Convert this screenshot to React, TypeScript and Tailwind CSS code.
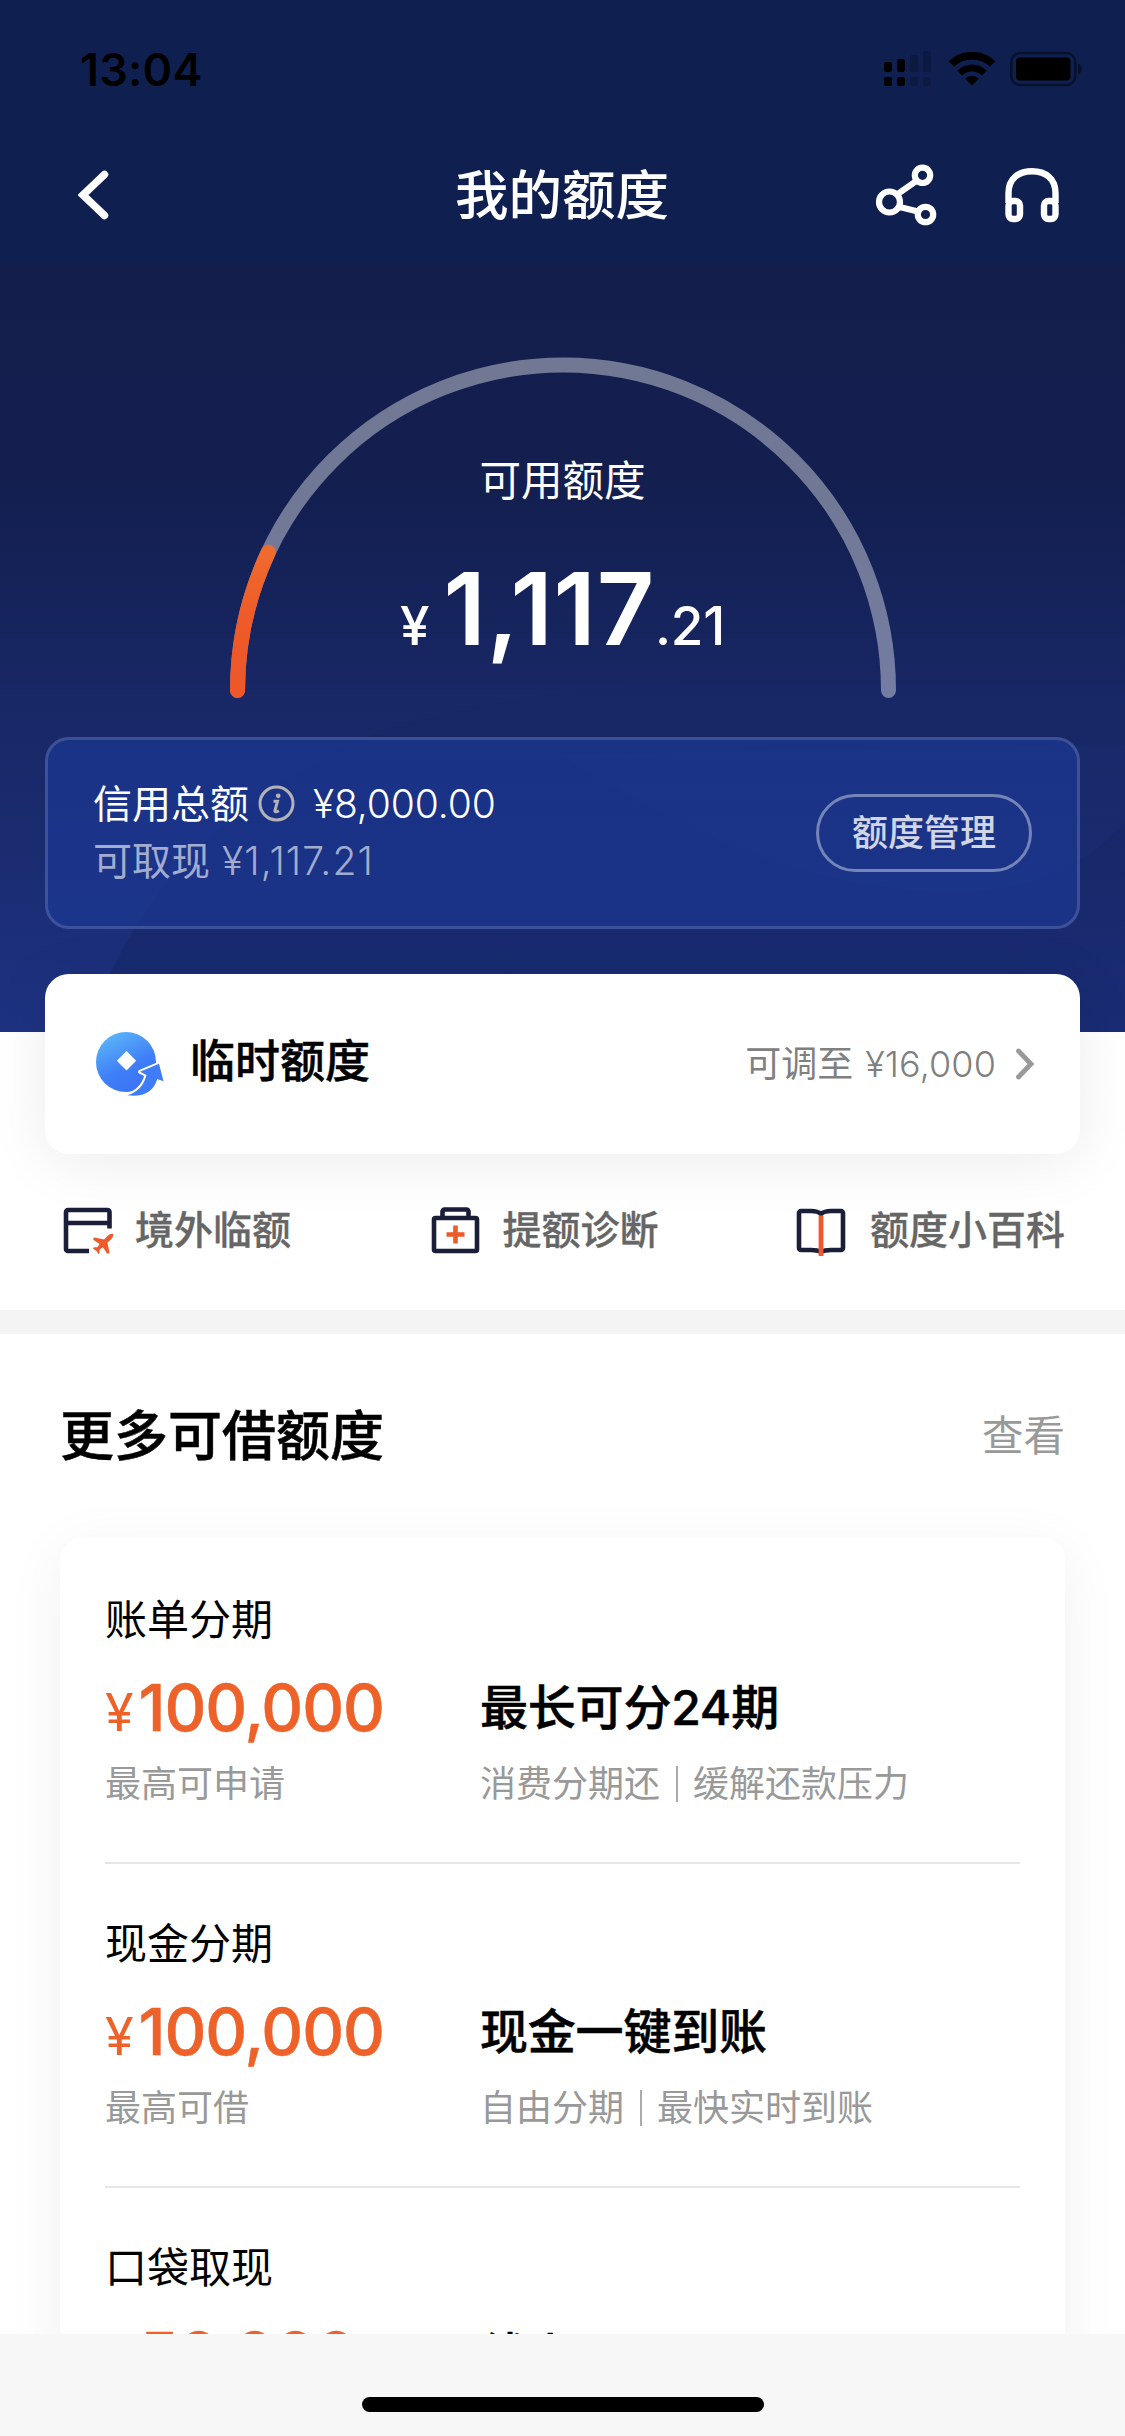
import type { ReactNode } from 'react';

interface Offer {
  name: string;
  amount: string;
  note?: string;
  title: string;
  tags?: string[];
}

const offers: Offer[] = [
  { name: '账单分期', amount: '100,000', note: '最高可申请', title: '最长可分24期', tags: ['消费分期还', '缓解还款压力'] },
  { name: '现金分期', amount: '100,000', note: '最高可借', title: '现金一键到账', tags: ['自由分期', '最快实时到账'] },
  { name: '口袋取现', amount: '50,000', title: '线上' },
];

const TOTAL = 8000;
const AVAILABLE = 1117.21;

function StatusBar() {
  return (
    <div className="flex h-[132px] items-center justify-between pt-1.5 pr-[43px] pl-[80px] text-black">
      <span className="text-[45px] leading-none font-semibold tracking-[0.2px]">13:04</span>
      <div className="flex items-center gap-[17px]">
        <svg width="48" height="36" viewBox="0 0 48 36" fill="currentColor">
          <rect x="0" y="11" width="8" height="10" rx="2" />
          <rect x="13" y="8" width="8" height="13" rx="2" />
          <rect x="26" y="4" width="8" height="17" rx="2" opacity=".2" />
          <rect x="39" y="0" width="8" height="21" rx="2" opacity=".2" />
          <rect x="0" y="26" width="8" height="9" rx="2" />
          <rect x="13" y="26" width="8" height="9" rx="2" />
          <rect x="26" y="26" width="8" height="9" rx="2" opacity=".2" />
          <rect x="39" y="26" width="8" height="9" rx="2" opacity=".2" />
        </svg>
        <svg width="46" height="34" viewBox="0 0 46 34" fill="none" stroke="currentColor">
          <path d="M2.5 12a29.5 29.5 0 0 1 41 0" strokeWidth="7.8" />
          <path d="M10.7 21a17.6 17.6 0 0 1 24.6 0" strokeWidth="7" />
          <path d="M23 33.5 16.2 26.6a9.8 9.8 0 0 1 13.6 0z" fill="currentColor" stroke="none" />
        </svg>
        <svg width="72" height="36" viewBox="0 0 72 36" className="-ml-[2px]">
          <rect x="1.3" y="2" width="64" height="32" rx="9" fill="none" stroke="currentColor" strokeWidth="2.6" opacity=".45" />
          <rect x="6" y="6.5" width="54.5" height="23" rx="4" fill="currentColor" />
          <path d="M68 12.5c5 2.5 5 8.5 0 11z" fill="currentColor" opacity=".5" />
        </svg>
      </div>
    </div>
  );
}

function NavBar() {
  return (
    <div className="grid h-[132px] grid-cols-3 items-center pr-[65px] pb-1.5 pl-[78px] text-white">
      <svg width="32" height="50" viewBox="0 0 32 50" fill="none" stroke="currentColor" strokeWidth="7.5" strokeLinecap="round">
        <path d="M26.5 4.5 5 25 26.5 45.5" strokeLinejoin="miter" />
      </svg>
      <h1 className="-ml-[14px] pt-[1px] text-center text-[53.5px] leading-none font-medium whitespace-nowrap">我的额度</h1>
      <div className="flex items-center justify-end gap-[67px]">
        <svg width="62" height="62" viewBox="0 0 62 62" fill="none" stroke="currentColor" strokeWidth="6.2">
          <circle cx="14.5" cy="38" r="10.5" />
          <circle cx="47.5" cy="11.3" r="7.7" />
          <circle cx="50.5" cy="50.5" r="7.7" />
          <path d="M22 30.5 42 16.5M24.5 43l18.5 4.5" />
        </svg>
        <svg width="56" height="56" viewBox="0 0 56 56" fill="none" stroke="currentColor" strokeWidth="6.4">
          <path d="M4.5 36V26C4.5 12 14 4.2 28 4.2S51.5 12 51.5 26v10" />
          <rect x="4.5" y="34" width="11.5" height="18" rx="4.5" />
          <rect x="40" y="34" width="11.5" height="18" rx="4.5" />
        </svg>
      </div>
    </div>
  );
}

// Half-circle gauge, the orange part is the share of the total that is available
function Gauge() {
  const angle = Math.PI * (AVAILABLE / TOTAL);
  const r = 325.5;
  const x = 333 - r * Math.cos(angle);
  const y = 333.5 - r * Math.sin(angle);

  return (
    <div className="mx-auto mt-[93px] grid h-[341px] w-[666px]">
      <svg className="col-start-1 row-start-1" width="666" height="341" viewBox="0 0 666 341" fill="none" strokeWidth="15" strokeLinecap="round">
        <defs>
          <linearGradient id="gauge" gradientUnits="userSpaceOnUse" x1="0" y1="185" x2="0" y2="341">
            <stop offset="0" stopColor="#f06c2d" />
            <stop offset=".5" stopColor="#ee5a29" />
            <stop offset="1" stopColor="#ef5628" />
          </linearGradient>
        </defs>
        <path d="M7.5 333.5a325.5 325.5 0 0 1 651 0" stroke="#fff" strokeOpacity=".4" />
        <path d={`M7.5 333.5A${r} ${r} 0 0 1 ${x} ${y}`} stroke="url(#gauge)" />
      </svg>
      <div className="col-start-1 row-start-1 flex flex-col items-center pt-[103px] text-white">
        <span className="text-[41.5px] leading-[42px]">可用额度</span>
        <div className="mt-[57px] flex items-baseline leading-[100px] font-medium">
          <span className="text-[53px]">¥</span>
          <span className="ml-[14px] text-[100px] font-semibold tracking-[0.8px]">1,117</span>
          <span className="text-[53px] tracking-[-0.3px]">.21</span>
        </div>
      </div>
    </div>
  );
}

function CreditPanel() {
  return (
    <div className="mx-[45px] mt-[39px] flex h-[192px] items-center justify-between rounded-[24px] border-[3px] border-white/15 bg-[#1d3a99]/60 pr-[45px] pl-[45px] text-white">
      <div className="flex flex-col gap-[18px] pb-[2px] text-[39px] leading-[39px]">
        <div className="flex items-center">
          <span>信用总额</span>
          <svg className="ml-[9px]" width="37" height="37" viewBox="0 0 37 37" fill="none" stroke="#b3b3b5">
            <circle cx="18.5" cy="18.5" r="16.5" strokeWidth="3" />
            <circle cx="20.2" cy="10.8" r="2.4" fill="#b3b3b5" stroke="none" />
            <path d="M15.5 16.3h4l-2.6 9.2c-.3 1.5.8 1.9 4 .2" strokeWidth="3" />
          </svg>
          <span className="ml-[18px] font-[350] tracking-[-0.1px]">¥8,000.00</span>
        </div>
        <div className="flex text-white/60">
          <span>可取现</span>
          <span className="ml-[12px] font-[350] tracking-[1.1px]">¥1,117.21</span>
        </div>
      </div>
      <button className="flex h-[78px] w-[216px] items-center justify-center rounded-full border-[3px] border-white/40 text-[36px] leading-none font-medium text-white/80">
        额度管理
      </button>
    </div>
  );
}

function TempLimitCard() {
  return (
    <div className="relative mx-[45px] -mt-[58px] flex h-[180px] items-center rounded-[24px] bg-white pr-[45px] pl-[45px] shadow-[0_8px_60px_rgba(0,0,0,0.08)]">
      <svg width="78" height="78" viewBox="0 0 78 78">
        <defs>
          <linearGradient id="coin" x1=".2" y1="0" x2=".7" y2="1">
            <stop offset="0" stopColor="#5cb8f9" />
            <stop offset=".6" stopColor="#3f7ff7" />
            <stop offset="1" stopColor="#3b72f6" />
          </linearGradient>
        </defs>
        <circle cx="36" cy="37" r="30" fill="url(#coin)" />
        <path d="m36.5 26 9.7 9.7-9.7 9.7-9.7-9.7z" fill="#fff" />
        <path
          d="M37.2 70.3C48 67 54 60 56.5 50l-6.5-3.2 19-8 4.5 17.5-6.3-2.3c-3.2 12.5-14 18.5-30 16.3z"
          fill="#3f7cf7"
          stroke="#fff"
          strokeWidth="4"
          strokeLinejoin="round"
          paintOrder="stroke"
        />
      </svg>
      <span className="-mt-[5px] ml-[22px] text-[45px] leading-none font-medium text-black [-webkit-text-stroke:0.5px]">临时额度</span>
      <div className="ml-auto flex items-center text-[36px] leading-none text-[#808080]">
        <span>可调至</span>
        <span className="ml-[12px] font-[350] tracking-[0.1px]">¥16,000</span>
        <svg className="ml-[19px]" width="20" height="32" viewBox="0 0 20 32" fill="none" stroke="#999" strokeWidth="4.8" strokeLinecap="round">
          <path d="m3.5 3 12.5 13-12.5 13" />
        </svg>
      </div>
    </div>
  );
}

function QuickLink({ icon, label }: { icon: ReactNode; label: string }) {
  return (
    <div className="flex items-center gap-[21px] text-[39px] leading-none font-medium text-[#666] [-webkit-text-stroke:0.3px]">
      {icon}
      <span>{label}</span>
    </div>
  );
}

function QuickLinks() {
  return (
    <div className="flex h-[156px] items-center justify-between pr-[60px] pb-[5px] pl-[62px]">
      <QuickLink
        label="境外临额"
        icon={
          <svg width="52" height="52" viewBox="0 0 52 52" fill="none" stroke="#1a1e38" strokeWidth="4.6">
            <path d="M27 47H6a2 2 0 0 1-2-2V8a2 2 0 0 1 2-2h39.5a2 2 0 0 1 2 2V24.5M4 19h43.5" />
            <path
              d="M17.8 19.2 16 11l3.5-3.5C21 6 21.5 4 21 3c-1-.5-3 0-4.5 1.5L13 8 4.8 6.2c-.5-.1-.9.1-1.1.5l-.3.5c-.2.5-.1 1 .3 1.3L9 12l-2 3H4l-1 1 3 2 2 3 1-1v-3l3-2 3.5 5.3c.3.4.8.5 1.3.3l.5-.2c.4-.3.6-.7.5-1.2z"
              transform="translate(27.5 26.5) scale(1.12)"
              fill="#ee5a29"
              stroke="none"
            />
          </svg>
        }
      />
      <QuickLink
        label="提额诊断"
        icon={
          <svg width="52" height="52" viewBox="0 0 52 52" fill="none" stroke="#1a1e38" strokeWidth="4.6">
            <rect x="5" y="14" width="43" height="33" rx="1.5" />
            <path d="M13.5 14V7.5a2 2 0 0 1 2-2h22a2 2 0 0 1 2 2V14" />
            <path d="M26.5 21.5v18M17.5 30.5h18" stroke="#ee5a29" />
          </svg>
        }
      />
      <QuickLink
        label="额度小百科"
        icon={
          <svg className="-ml-[2px] mr-[2px]" width="52" height="52" viewBox="0 0 52 52" fill="none" stroke="#1a1e38" strokeWidth="4.6">
            <path d="M26 10C23 7.3 20 7 16 7H6a2 2 0 0 0-2 2v35a2 2 0 0 0 2 2h10c4 0 7 .3 10 1.8 3-1.5 6-1.8 10-1.8h10a2 2 0 0 0 2-2V9a2 2 0 0 0-2-2H36c-4 0-7 .3-10 3z" />
            <path d="M26 11.500V52" stroke="#ee5a29" strokeWidth="4.8" />
          </svg>
        }
      />
    </div>
  );
}

function OfferRow({ offer }: { offer: Offer }) {
  return (
    <div className="h-[324px] border-b-2 border-[#e6e6e6] pt-[59px]">
      <div className="text-[42px] leading-[42px] text-black">{offer.name}</div>
      <div className="mt-[37px] grid h-[60px] grid-cols-[375px_1fr]">
        <div className="flex items-baseline leading-[60px] text-[#ee6229]">
          <span className="text-[52px]">¥</span>
          <span className="ml-[5px] text-[65px] font-medium tracking-[-1.1px] [-webkit-text-stroke:0.5px]">{offer.amount}</span>
        </div>
        <div className="text-[48px] leading-[60px] font-medium tracking-[-0.2px] text-black [-webkit-text-stroke:0.5px]">{offer.title}</div>
      </div>
      {offer.tags && (
        <div className="mt-[28px] grid grid-cols-[375px_1fr] text-[36px] leading-[36px] text-[#999]">
          <span>{offer.note}</span>
          <div className="flex items-center">
            <span>{offer.tags[0]}</span>
            <span className="mr-[15px] ml-[16px] h-[36px] w-[2px] bg-[#aaa]" />
            <span>{offer.tags[1]}</span>
          </div>
        </div>
      )}
    </div>
  );
}

export default function App() {
  return (
    <div className="flex h-[2436px] w-[1125px] flex-col overflow-hidden bg-white font-['Inter','Noto_Sans_CJK_SC',sans-serif]">
      <div className="h-[2334px] overflow-hidden">
        <header className="h-[264px] bg-[#0f2050]">
          <StatusBar />
          <NavBar />
        </header>

        <section className="relative flow-root h-[768px] bg-[linear-gradient(180deg,#141e4c_0%,#131f50_30%,#182765_56%,#1a2b70_76%,#1d3282_100%)]">
          {/* Soft waves behind the panels */}
          <svg className="absolute inset-0" width="1125" height="768" viewBox="0 0 1125 768">
            <defs>
              <linearGradient id="wave" x1="0" y1="0" x2="0" y2="1">
                <stop offset="0" stopColor="#101d55" stopOpacity="0" />
                <stop offset=".45" stopColor="#101d55" stopOpacity=".25" />
                <stop offset="1" stopColor="#101d55" stopOpacity=".3" />
              </linearGradient>
            </defs>
            <path d="M88 768C130 640 200 560 330 490 500 400 800 420 1125 400v368z" fill="url(#wave)" />
            <path d="M560 490c110 70 240 138 394 138 80 0 130-26 171-69V480z" fill="#3050b0" fillOpacity=".07" />
          </svg>
          <div className="relative">
            <Gauge />
            <CreditPanel />
          </div>
        </section>

        <TempLimitCard />
        <QuickLinks />
        <div className="h-[24px] bg-[#f4f4f4]" />

        <section className="px-[60px]">
          <div className="flex h-[203px] items-center justify-between">
            <h2 className="pt-[2px] text-[54px] leading-none font-medium text-black [-webkit-text-stroke:0.5px]">更多可借额度</h2>
            <span className="pt-[3px] text-[41.5px] leading-none text-[#999]">查看</span>
          </div>
          <div className="rounded-[24px] bg-white px-[45px] pt-[3px] shadow-[0_12px_60px_rgba(0,0,0,0.06)]">
            {offers.map((offer) => (
              <OfferRow key={offer.name} offer={offer} />
            ))}
          </div>
        </section>
      </div>

      <footer className="flex flex-1 items-center justify-center bg-[#f7f7f7] pt-[39px]">
        <div className="h-[15px] w-[402px] rounded-full bg-black" />
      </footer>
    </div>
  );
}
